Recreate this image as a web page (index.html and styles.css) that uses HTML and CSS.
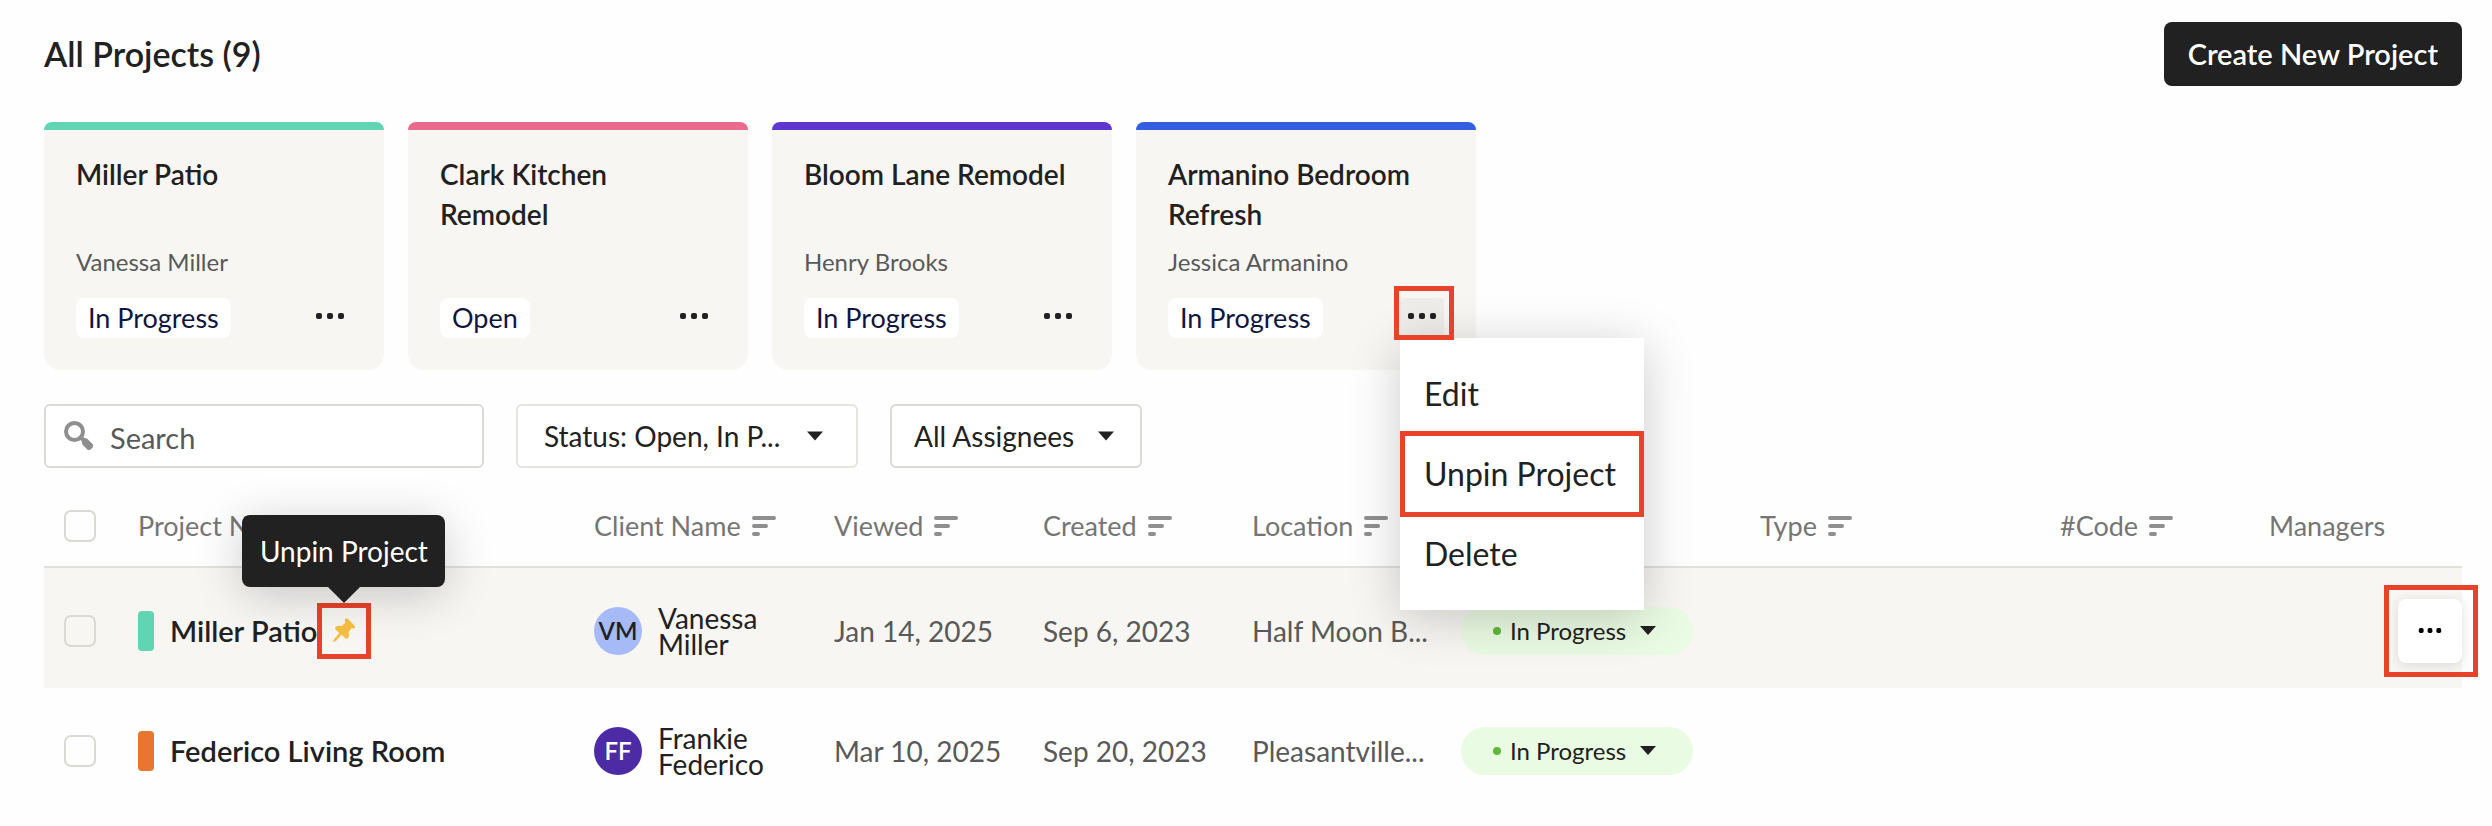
FILE: index.html
```html
<!DOCTYPE html>
<html lang="en">
<head>
<meta charset="utf-8">
<title>All Projects</title>
<link rel="stylesheet" href="styles.css">
</head>
<body>
<svg class="sprite" aria-hidden="true">
  <symbol id="dots" viewBox="0 0 30 8"><rect x="1" y="1" width="6" height="6" rx="2"/><rect x="12" y="1" width="6" height="6" rx="2"/><rect x="23" y="1" width="6" height="6" rx="2"/></symbol>
  <symbol id="sort" viewBox="0 0 24 20"><rect width="24" height="4" rx="2"/><rect y="8" width="16" height="4" rx="2"/><rect y="16" width="8" height="4" rx="2"/></symbol>
  <symbol id="caret" viewBox="0 0 16 9"><path d="M0 0h16L8 9z"/></symbol>
</svg>
<header class="top">
  <h1>All Projects (9)</h1>
  <button class="create" type="button">Create New Project</button>
</header>

<section class="cards" aria-label="Pinned projects">
  <article class="card teal">
    <h2>Miller Patio</h2>
    <p class="client">Vanessa Miller</p>
    <div class="foot"><span class="tag">In Progress</span><button class="more" type="button" aria-label="More"><svg><use href="#dots"/></svg></button></div>
  </article>
  <article class="card pink">
    <h2>Clark Kitchen Remodel</h2>
    <p class="client"></p>
    <div class="foot"><span class="tag">Open</span><button class="more" type="button" aria-label="More"><svg><use href="#dots"/></svg></button></div>
  </article>
  <article class="card violet">
    <h2>Bloom Lane Remodel</h2>
    <p class="client">Henry Brooks</p>
    <div class="foot"><span class="tag">In Progress</span><button class="more" type="button" aria-label="More"><svg><use href="#dots"/></svg></button></div>
  </article>
  <article class="card blue">
    <h2>Armanino Bedroom Refresh</h2>
    <p class="client">Jessica Armanino</p>
    <div class="foot"><span class="tag">In Progress</span>
      <div class="menu-anchor">
        <button class="more open" type="button" aria-label="More"><svg><use href="#dots"/></svg></button>
        <div class="menu">
          <button type="button">Edit</button>
          <button type="button" class="marked">Unpin Project</button>
          <button type="button">Delete</button>
        </div>
        <span class="ring"></span>
      </div>
    </div>
  </article>
</section>

<section class="filters" aria-label="Filters">
  <label class="search">
    <svg viewBox="0 0 30 30"><circle cx="10.500" cy="10.500" r="8.500" fill="none" stroke="currentColor" stroke-width="4"/><path d="M16 18l2.500-2.500 2.200 1.600 2.300.3 6 6.200v2.400l-3 3h-2.200l-5.500-5.600-.4-2.600z"/></svg>
    <input type="text" placeholder="Search" aria-label="Search">
  </label>
  <span class="pick status"><select aria-label="Status"><option>Status: Open, In P...</option></select><svg><use href="#caret"/></svg></span>
  <span class="pick people"><select aria-label="Assignees"><option>All Assignees</option></select><svg><use href="#caret"/></svg></span>
</section>

<table class="projects">
  <colgroup><col class="c-check"><col class="c-name"><col class="c-client"><col class="c-date"><col class="c-date"><col class="c-date"><col class="c-status"><col class="c-type"><col class="c-code"><col></colgroup>
  <thead>
    <tr>
      <th><input type="checkbox" aria-label="Select all"></th>
      <th>Project Name</th>
      <th>Client Name <svg><use href="#sort"/></svg></th>
      <th>Viewed <svg><use href="#sort"/></svg></th>
      <th>Created <svg><use href="#sort"/></svg></th>
      <th>Location <svg><use href="#sort"/></svg></th>
      <th></th>
      <th>Type <svg><use href="#sort"/></svg></th>
      <th>#Code <svg><use href="#sort"/></svg></th>
      <th>Managers</th>
    </tr>
  </thead>
  <tbody>
    <tr class="hover">
      <td><input type="checkbox" aria-label="Select Miller Patio"></td>
      <td><div class="name"><span class="chip teal-bg"></span><a href="#">Miller Patio</a><span class="pin-wrap"><button class="pin" type="button" aria-label="Unpin Project"><svg viewBox="0 0 26 30"><path d="M14.800.8q1.200-1.200 2.400 0l8 8.200q1 1.200 0 2.300-1 1.200-3.600.4l-3.400 4.600q1.600 4.200-.4 6.600-1.600 2-3.200.6l-4.400-4.300-6.600 7.200-2.800 1.200q-.8-.4-.2-1.600l1-1.800 6-6.600-4.200-4.400q-1.400-1.600.2-3 2.600-2.200 6.400-.8L14.600 5.600q-1.200-3.200.2-4.800z"/></svg></button><span class="tip" role="tooltip">Unpin Project</span></span></div></td>
      <td><div class="person"><span class="avatar vm">VM</span><span>Vanessa<br>Miller</span></div></td>
      <td>Jan 14, 2025</td>
      <td>Sep 6, 2023</td>
      <td>Half Moon B...</td>
      <td><button class="pill" type="button"><i></i>In Progress<svg><use href="#caret"/></svg></button></td>
      <td></td>
      <td></td>
      <td><div class="row-end"><span class="row-ring"><button class="row-more" type="button" aria-label="Row actions"><svg><use href="#dots"/></svg></button></span></div></td>
    </tr>
    <tr>
      <td><input type="checkbox" aria-label="Select Federico Living Room"></td>
      <td><div class="name"><span class="chip orange-bg"></span><a href="#">Federico Living Room</a></div></td>
      <td><div class="person"><span class="avatar ff">FF</span><span>Frankie<br>Federico</span></div></td>
      <td>Mar 10, 2025</td>
      <td>Sep 20, 2023</td>
      <td>Pleasantville...</td>
      <td><button class="pill" type="button"><i></i>In Progress<svg><use href="#caret"/></svg></button></td>
      <td></td>
      <td></td>
      <td></td>
    </tr>
  </tbody>
</table>
</body>
</html>
```
FILE: styles.css
```css
* { box-sizing: border-box; }
body {
  margin: 0;
  padding: 22px 30px 0 44px;
  background: #fefefe;
  color: #212121;
  font: 28px/40px Lato, "Open Sans", sans-serif;
}
button, input, select { font: inherit; color: inherit; margin: 0; }
button { padding: 0; border: 0; background: none; }
h1, h2, p { margin: 0; }
svg { display: block; fill: currentColor; flex: none; }
.sprite { position: absolute; width: 0; height: 0; }

.top { display: flex; justify-content: space-between; align-items: center; }
h1 { font-size: 34px; font-weight: 600; }
.create { height: 64px; padding: 0 24px; border-radius: 8px; background: #212121; color: #fff; font-size: 29px; font-weight: 600; }

.cards { display: flex; gap: 24px; margin-top: 36px; }
.card { width: 340px; padding: 24px 32px 32px; border-top: 8px solid; border-radius: 8px 8px 16px 16px; background: #f7f6f3; }
.teal { border-color: #61d4b3; }
.pink { border-color: #e96a8a; }
.violet { border-color: #6036d0; }
.blue { border-color: #345ee0; }
.card h2 { height: 80px; font-size: 28px; font-weight: 600; white-space: normal; }
.client { height: 40px; margin: 8px 0 16px; font-size: 24px; color: #595959; }
.foot { display: flex; justify-content: space-between; align-items: center; }
.tag { padding: 0 12px; border-radius: 8px; background: #fff; color: #101540; font-size: 27px; }
.more { display: grid; place-items: center; width: 44px; height: 40px; padding-bottom: 4px; border-radius: 4px; }
.more svg { width: 30px; height: 8px; }
.more.open { background: #eeede9; }
.menu-anchor { position: relative; }
.ring { position: absolute; inset: -12px -10px -2px -6px; border: 5px solid #e8432a; z-index: 3; pointer-events: none; }
.menu { position: absolute; top: 40px; left: 0; z-index: 2; width: 244px; padding: 16px 0; background: #fff; box-shadow: 0 8px 48px rgba(0,0,0,.2); font-size: 32px; }
.menu button { display: block; width: 100%; height: 80px; padding-left: 24px; text-align: left; white-space: nowrap; }
.menu .marked { height: 86px; margin: -3px 0; padding-left: 19px; border: 5px solid #e8432a; }

.filters { display: flex; align-items: flex-start; gap: 32px; margin-top: 34px; }
.search, .pick { position: relative; display: flex; align-items: center; height: 64px; border: 2px solid #dbd9d3; border-radius: 6px; background: #fff; }
.search { width: 440px; padding: 0 18px; gap: 16px; color: #8f8f8f; }
.search svg { width: 30px; height: 32px; }
.search input { flex: 1; min-width: 0; border: 0; padding: 4px 0 0; background: none; color: #595959; font-size: 29px; }
.search input::placeholder { color: #595959; opacity: 1; }
.pick select { width: 100%; height: 100%; border: 0; background: none; appearance: none; }
.pick svg { position: absolute; right: 26px; width: 16px; height: 10px; pointer-events: none; }
.status { width: 342px; border-color: #e6e4de; }
.status select { padding-left: 26px; }
.status svg { right: 33px; }
.people { width: 252px; }
.people select { padding-left: 22px; }

.projects { width: 100%; margin-top: 18px; border-collapse: separate; border-spacing: 0; table-layout: fixed; }
.c-check { width: 94px; }
.c-name { width: 456px; }
.c-client { width: 240px; }
.c-date { width: 209px; }
.c-status { width: 299px; }
.c-type { width: 300px; }
.c-code { width: 209px; }
th, td { padding: 0; text-align: left; white-space: nowrap; }
th { height: 82px; border-bottom: 2px solid #e1e0db; font-size: 27px; font-weight: 400; color: #757575; }
th svg { display: inline-block; width: 24px; height: 20px; margin-left: 4px; color: #8f8f8f; }
td { height: 120px; padding-top: 5px; color: #595959; }
.hover { background: #f7f6f3; }
input[type="checkbox"] { display: block; appearance: none; width: 32px; height: 32px; margin-left: 20px; border: 2px solid #dbd9d3; border-radius: 7px; }
.name { display: flex; align-items: center; }
.name a { color: #212121; font-size: 29px; font-weight: 600; text-decoration: none; }
.chip { width: 16px; height: 40px; margin-right: 16px; border-radius: 4px; }
.teal-bg { background: #61d4b3; }
.orange-bg { background: #e87530; }
.pin-wrap { position: relative; display: flex; }
.pin { display: grid; place-items: center; width: 54px; height: 56px; border: 5px solid #e8432a; color: #f5bf42; }
.pin svg { width: 26px; height: 26px; }
.tip { position: absolute; left: 50%; bottom: 72px; z-index: 2; width: 203px; height: 72px; margin-left: -102px; border-radius: 8px; background: #212121; color: #fff; line-height: 72px; text-align: center; box-shadow: 0 8px 48px rgba(0,0,0,.2); }
.tip::after { content: ""; position: absolute; top: 100%; left: 50%; margin-left: -16px; border: 16px solid transparent; border-top-color: #212121; border-bottom: 0; }
.person { display: flex; align-items: center; gap: 16px; color: #212121; line-height: 26px; }
.avatar { width: 48px; height: 48px; border-radius: 50%; font-size: 24px; font-weight: 600; line-height: 48px; text-align: center; }
.vm { background: #a6baf8; }
.ff { background: #4c2ba5; color: #fff; }
.pill { display: flex; align-items: center; width: 232px; height: 48px; padding-left: 32px; border-radius: 24px; background: #eafbe3; color: #212121; font-size: 24px; }
.pill i { width: 8px; height: 8px; margin-right: 9px; border-radius: 50%; background: #62b83a; }
.pill svg { width: 16px; height: 9px; margin-left: 14px; }
.row-end { display: flex; justify-content: flex-end; }
.row-ring { margin-right: -16px; padding: 9px 11px 9px 9px; border: 5px solid #e8432a; }
.row-more { display: grid; place-items: center; width: 64px; height: 64px; border-radius: 8px; background: #fff; color: #000; box-shadow: 0 2px 12px rgba(0,0,0,.12); }
.row-more svg { width: 24px; height: 7px; }
```
